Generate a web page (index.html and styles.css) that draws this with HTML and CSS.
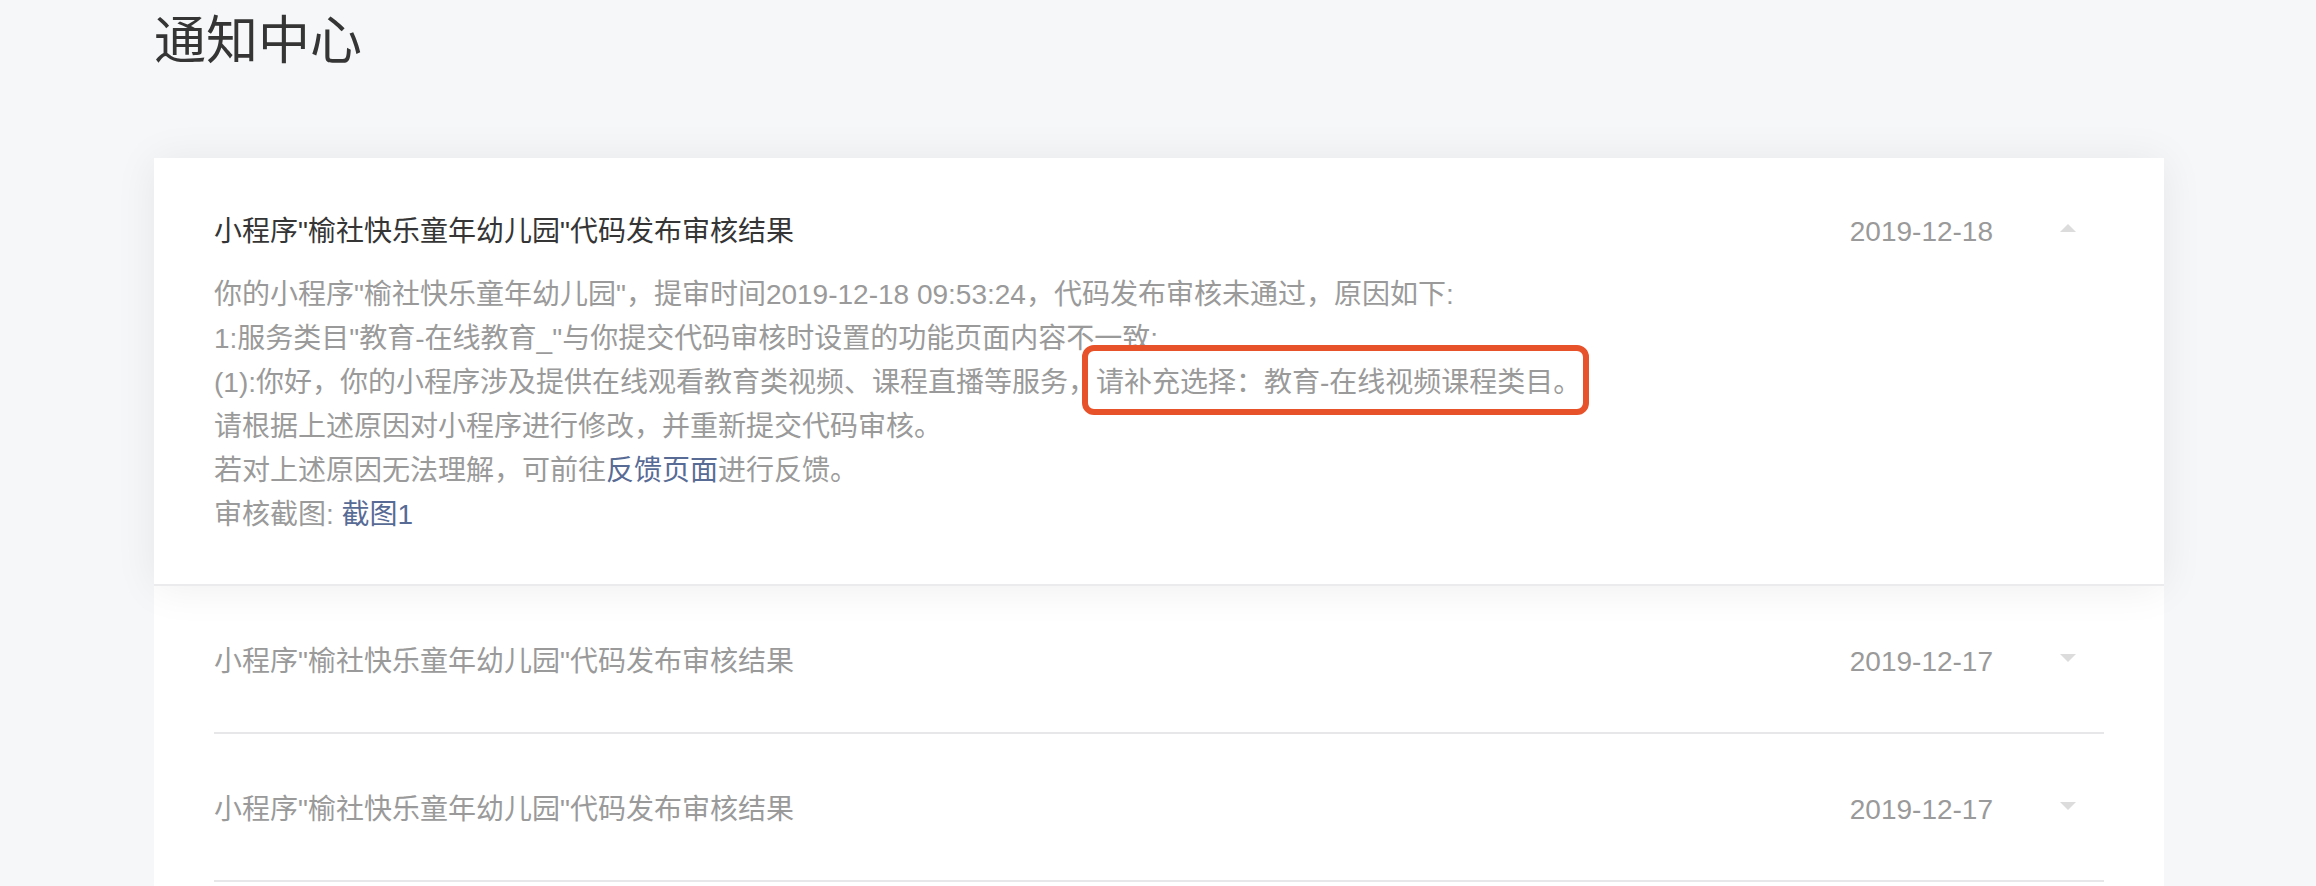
FILE: index.html
```html
<!DOCTYPE html>
<html lang="zh-CN">
<head>
<meta charset="utf-8">
<title>通知中心</title>
<link rel="stylesheet" href="styles.css">
</head>
<body>
<div class="page">
  <h1 class="page-title">通知中心</h1>
  <div class="list">
    <div class="item open">
      <div class="item-head">
        <div class="item-title">小程序"榆社快乐童年幼儿园"代码发布审核结果</div>
        <div class="item-date">2019-12-18</div>
        <span class="caret up"></span>
      </div>
      <div class="item-body">
        <p>你的小程序"榆社快乐童年幼儿园"，提审时间2019-12-18 09:53:24，代码发布审核未通过，原因如下:</p>
        <p>1:服务类目"教育-在线教育_"与你提交代码审核时设置的功能页面内容不一致:</p>
        <p>(1):你好，你的小程序涉及提供在线观看教育类视频、课程直播等服务，<span class="mark">请补充选择：教育-在线视频课程类目。</span></p>
        <p>请根据上述原因对小程序进行修改，并重新提交代码审核。</p>
        <p>若对上述原因无法理解，可前往<a class="link" href="#">反馈页面</a>进行反馈。</p>
        <p>审核截图: <a class="link" href="#">截图1</a></p>
      </div>
    </div>
    <div class="item">
      <div class="item-row">
        <div class="item-title muted">小程序"榆社快乐童年幼儿园"代码发布审核结果</div>
        <div class="item-date">2019-12-17</div>
        <span class="caret down"></span>
      </div>
    </div>
    <div class="item">
      <div class="item-row">
        <div class="item-title muted">小程序"榆社快乐童年幼儿园"代码发布审核结果</div>
        <div class="item-date">2019-12-17</div>
        <span class="caret down"></span>
      </div>
    </div>
  </div>
</div>
</body>
</html>
```

FILE: styles.css
```css
html, body {
  margin: 0;
  padding: 0;
  background: #f6f7f9;
}
body {
  font-family: "Liberation Sans", "Noto Sans CJK SC", sans-serif;
  color: #353535;
}
.page {
  padding: 0 152px 0 154px;
}
.page-title {
  margin: 0 0 81px;
  padding-top: 5px;
  font-size: 52px;
  line-height: 72px;
  font-weight: normal;
  color: #353535;
}
.list {
  background: #fff;
  padding-bottom: 40px;
}
.item {
  padding: 0 60px;
  font-size: 28px;
}
.item.open {
  position: relative;
  z-index: 1;
  padding: 52px 60px 47px;
  background: #fff;
  border-bottom: 2px solid #ebebed;
  box-shadow: 0 2px 40px rgba(0, 0, 0, 0.07);
}
.item-head,
.item-row {
  display: flex;
  align-items: center;
  line-height: 44px;
}
.item-row {
  padding: 54px 0 48px;
  border-bottom: 2px solid #e7e7e9;
}
.item-title {
  flex: 1;
  color: #353535;
}
.item-title.muted {
  color: #9a9a9a;
}
.item-date {
  color: #9a9a9a;
}
.caret {
  width: 0;
  height: 0;
  margin: 0 28px 8px 67px;
  border-left: 8px solid transparent;
  border-right: 8px solid transparent;
}
.caret.up {
  border-bottom: 8px solid #dcdcdc;
}
.caret.down {
  border-top: 8px solid #dcdcdc;
}
.item-body {
  margin-top: 19px;
  color: #9a9a9a;
  line-height: 44px;
}
.item-body p {
  margin: 0;
}
.link {
  color: #576b95;
  text-decoration: none;
}
.mark {
  position: relative;
  display: inline-block;
  line-height: 44px;
}
.mark::after {
  content: "";
  position: absolute;
  left: -14px;
  right: -8px;
  top: -16px;
  bottom: -10px;
  border: 6px solid #e8522b;
  border-radius: 12px;
}
```
